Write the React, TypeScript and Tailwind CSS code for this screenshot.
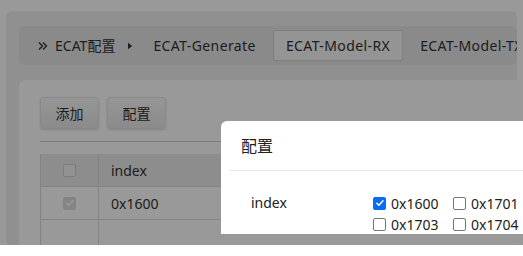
import React from 'react';

const tabs = ['ECAT-Generate', 'ECAT-Model-RX', 'ECAT-Model-TX'];
const options = [
  { label: '0x1600', checked: true },
  { label: '0x1701', checked: false },
  { label: '0x1703', checked: false },
  { label: '0x1704', checked: false },
];

const Check: React.FC<{ checked?: boolean; muted?: boolean }> = ({ checked, muted }) => {
  if (checked) {
    return (
      <span
        className={`inline-flex h-[13px] w-[13px] shrink-0 items-center justify-center rounded-[2px] ${
          muted ? 'bg-[#dcdcdc]' : 'bg-[#0a6cf5]'
        }`}
      >
        <svg viewBox="0 0 12 12" className="h-[10px] w-[10px]" fill="none">
          <path d="M2.2 6.3l2.4 2.4 5-5.4" stroke="white" strokeWidth="1.8" strokeLinecap="round" strokeLinejoin="round" />
        </svg>
      </span>
    );
  }
  return <span className="inline-block h-[13px] w-[13px] shrink-0 rounded-[2px] border border-[#767676] bg-white" />;
};

export default function App() {
  return (
    <div className="relative h-[245px] overflow-hidden bg-white font-['Noto_Sans','Noto_Sans_CJK_SC',sans-serif] text-[14px] text-[#333]">
      {/* page */}
      <div className="h-full pl-[6px] pr-[6px] pt-[11px]">
        <div className="flex h-full flex-col overflow-hidden rounded-md bg-[#f0f0f0] pl-[13px] pt-[15px]">
          <div className="flex h-[39px] shrink-0 items-center overflow-hidden rounded-md bg-[#e6e6e6] pl-[19px] whitespace-nowrap">
            <svg viewBox="0 0 10 10" className="h-[10px] w-[10px] shrink-0" fill="none">
              <path d="M1 1.5l3.5 3.5L1 8.5M5 1.5l3.5 3.5L5 8.5" stroke="#333" strokeWidth="1.4" />
            </svg>
            <span className="ml-[7px] shrink-0">ECAT配置</span>
            <svg viewBox="0 0 6 8" className="ml-[13px] h-[8px] w-[5px] shrink-0">
              <path d="M0 0l5 4-5 4z" fill="#333" />
            </svg>
            <div className="ml-[20px] flex shrink-0 items-center gap-[17px] tracking-[0.4px]">
              {tabs.map((t, i) => (
                <span
                  key={t}
                  className={
                    i === 1
                      ? 'shrink-0 rounded-[2px] border border-[#d4d4d4] bg-[#f7f7f7] px-[12px] py-[4px]'
                      : 'shrink-0 py-[5px]'
                  }
                >
                  {t}
                </span>
              ))}
            </div>
          </div>
          <div className="mt-[15px] min-h-0 flex-1 rounded-tl-md bg-white pl-[21px] pt-[17px]">
            <div className="flex gap-[8px]">
              {['添加', '配置'].map((b) => (
                <button
                  key={b}
                  className="h-[32px] w-[59px] rounded-[3px] border border-[#e3e3e3] bg-gradient-to-b from-[#fafafa] to-[#e8e8e8] shadow-[0_1px_2px_rgba(0,0,0,0.15)]"
                >
                  {b}
                </button>
              ))}
            </div>
            <div className="mt-[12px] h-px bg-[#cfcfcf]" />
            <div className="mt-[12px] border-l border-[#dcdcdc]">
              <div className="flex h-[33px] items-center border-b border-[#dcdcdc] bg-[#ececec]">
                <div className="flex h-full w-[58px] items-center justify-center border-r border-[#dcdcdc]">
                  <span className="inline-block h-[13px] w-[13px] rounded-[2px] border border-[#cfcfcf] bg-[#f4f4f4]" />
                </div>
                <span className="pl-[12px]">index</span>
              </div>
              <div className="flex h-[33px] items-center border-b border-[#dcdcdc]">
                <div className="flex h-full w-[58px] items-center justify-center border-r border-[#dcdcdc]">
                  <Check checked muted />
                </div>
                <span className="pl-[12px]">0x1600</span>
              </div>
              <div className="flex h-[33px]">
                <div className="h-full w-[58px] border-r border-[#dcdcdc]" />
              </div>
            </div>
          </div>
        </div>
      </div>

      {/* overlay */}
      <div className="absolute inset-0 bg-black/40" />

      {/* dialog */}
      <div className="absolute left-[221px] top-[121px] w-[330px] rounded-tl-md bg-white">
        <div className="flex h-[49px] items-center pl-[20px] text-[16px] text-[#222]">配置</div>
        <div className="ml-[9px] h-px bg-[#e5e5e5]" />
        <div className="flex pl-[30px] pt-[22px] text-[#222]">
          <span className="w-[122px] leading-[20px]">index</span>
          <div className="grid grid-cols-[80px_80px] gap-y-[1px]">
            {options.map((o) => (
              <label key={o.label} className="flex h-[20px] items-center gap-[5px]">
                <Check checked={o.checked} />
                <span>{o.label}</span>
              </label>
            ))}
          </div>
        </div>
      </div>
    </div>
  );
}
